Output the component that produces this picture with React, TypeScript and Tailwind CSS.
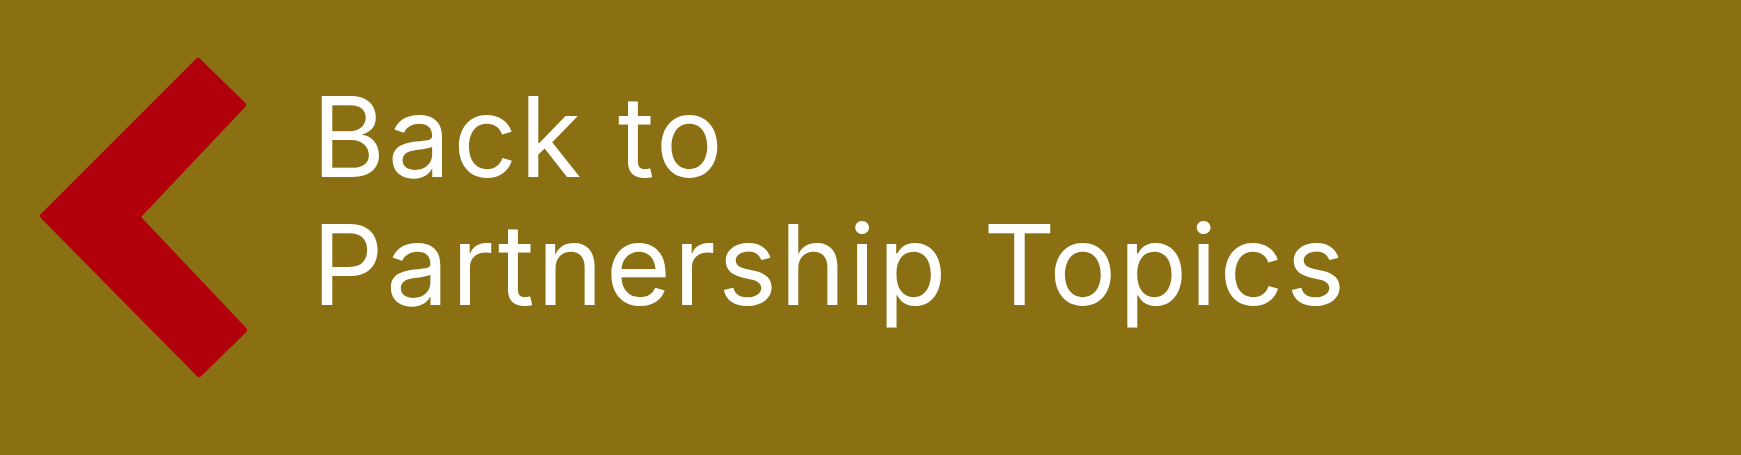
import React from 'react';

// Left-pointing chevron drawn as one filled outline
const BackChevron: React.FC = () => (
  <svg width="212" height="324" viewBox="0 0 212 324" className="shrink-0">
    <polygon
      points="160,5 205,49 99,161 206,274 161,318 5,160"
      fill="#b1000c"
      stroke="#b1000c"
      strokeWidth="6"
      strokeLinejoin="round"
    />
  </svg>
);

export default function App() {
  return (
    <div className="w-[1741px] h-[455px] bg-[#8b7013] flex items-start overflow-hidden">
      <div className="ml-[38px] mt-[56px]">
        <BackChevron />
      </div>
      <a
        href="#"
        className="ml-[62px] mt-[72px] text-white text-[112px] leading-[128px] font-normal tracking-[2.5px] no-underline"
        style={{ fontFamily: 'Inter, Lato, sans-serif' }}
      >
        Back to
        <br />
        Partnership Topics
      </a>
    </div>
  );
}
